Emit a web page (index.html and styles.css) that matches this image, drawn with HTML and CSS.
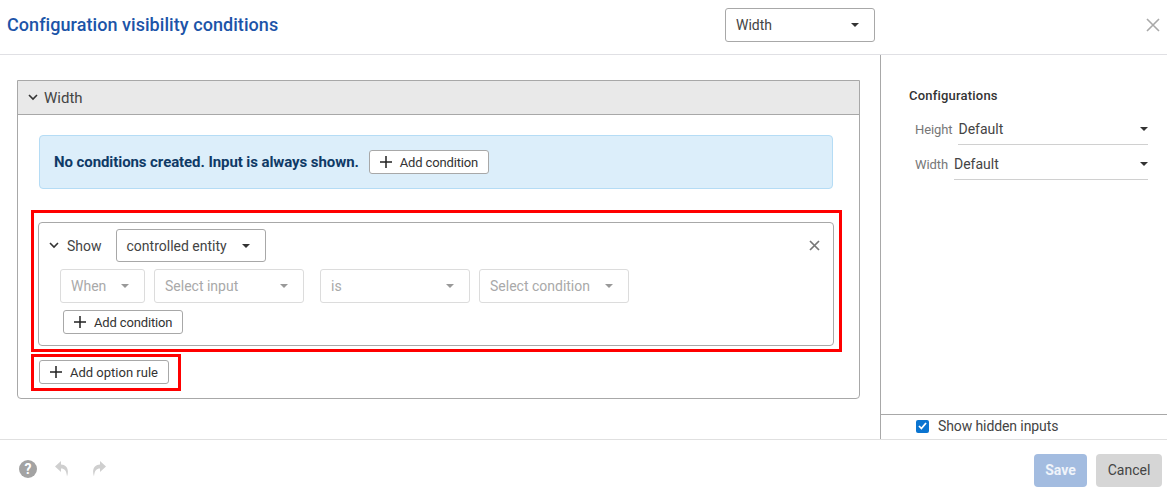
FILE: index.html
```html
<!DOCTYPE html>
<html lang="en">
<head>
<meta charset="utf-8">
<title>Configuration visibility conditions</title>
<link rel="stylesheet" href="styles.css">
</head>
<body>
<div class="dialog">
  <header class="head">
    <h1 class="title">Configuration visibility conditions</h1>
    <div class="select head-select"><span>Width</span><i class="caret"></i></div>
    <svg class="close" width="14" height="14" viewBox="0 0 14 14"><path d="M1 1l12 12M13 1L1 13" stroke="#a9a9a9" stroke-width="1.6" fill="none"/></svg>
  </header>
  <div class="body">
    <main class="main">
      <section class="panel">
        <div class="panel-head">
          <svg class="chev" width="10" height="7" viewBox="0 0 10 7"><path d="M1 1l4 4 4-4" stroke="#333" stroke-width="1.6" fill="none"/></svg>
          <span>Width</span>
        </div>
        <div class="panel-body">
          <div class="info">
            <strong>No conditions created. Input is always shown.</strong>
            <button class="btn"><svg class="plus" width="12" height="12" viewBox="0 0 12 12"><path d="M6 0v12M0 6h12" stroke="#222" stroke-width="1.5"/></svg>Add condition</button>
          </div>
          <div class="card">
            <div class="row-show">
              <svg class="chev" width="10" height="7" viewBox="0 0 10 7"><path d="M1 1l4 4 4-4" stroke="#333" stroke-width="1.6" fill="none"/></svg>
              <span class="show">Show</span>
              <div class="select entity"><span>controlled entity</span><i class="caret"></i></div>
              <svg class="card-x" width="11" height="11" viewBox="0 0 11 11"><path d="M1 1l9 9M10 1l-9 9" stroke="#777" stroke-width="1.7" fill="none"/></svg>
            </div>
            <div class="row-when">
              <div class="select off w-when"><span>When</span><i class="caret"></i></div>
              <div class="select off w-input"><span>Select input</span><i class="caret"></i></div>
              <div class="select off w-is"><span>is</span><i class="caret"></i></div>
              <div class="select off w-cond"><span>Select condition</span><i class="caret"></i></div>
            </div>
            <button class="btn card-btn"><svg class="plus" width="12" height="12" viewBox="0 0 12 12"><path d="M6 0v12M0 6h12" stroke="#222" stroke-width="1.5"/></svg>Add condition</button>
          </div>
          <button class="btn rule-btn"><svg class="plus" width="12" height="12" viewBox="0 0 12 12"><path d="M6 0v12M0 6h12" stroke="#222" stroke-width="1.5"/></svg>Add option rule</button>
        </div>
      </section>
      <div class="mark mark-card"></div>
      <div class="mark mark-rule"></div>
    </main>
    <aside class="side">
      <div class="side-top">
        <h2 class="side-title">Configurations</h2>
        <div class="cfg"><label>Height</label><div class="cfg-val"><span>Default</span><i class="caret dark"></i></div></div>
        <div class="cfg"><label>Width</label><div class="cfg-val"><span>Default</span><i class="caret dark"></i></div></div>
      </div>
      <div class="side-foot">
        <span class="check"><svg width="9" height="8" viewBox="0 0 9 8"><path d="M1 4l2.400 2.500L8 1" stroke="#fff" stroke-width="1.8" fill="none"/></svg></span>
        <span>Show hidden inputs</span>
      </div>
    </aside>
  </div>
  <footer class="foot">
    <div class="tools">
      <svg width="18" height="18" viewBox="0 0 18 18"><circle cx="9" cy="9" r="9" fill="#a3a3a3"/><text x="9" y="14" text-anchor="middle" class="q">?</text></svg>
      <svg class="undo" width="14" height="16" viewBox="0 0 14 16"><path d="M6 0L0 5.500 6 11V7.500c3.500 0 5.500 2 6 8 2.500-7-.5-12-6-12z" fill="#cfcfcf"/></svg>
      <svg class="redo" width="14" height="16" viewBox="0 0 14 16"><path d="M8 0l6 5.500L8 11V7.500c-3.500 0-5.500 2-6 8-2.500-7 .5-12 6-12z" fill="#cfcfcf"/></svg>
    </div>
    <div class="actions">
      <button class="act save">Save</button>
      <button class="act cancel">Cancel</button>
    </div>
  </footer>
</div>
</body>
</html>
```
FILE: styles.css
```css
* { box-sizing: border-box; }
html, body { margin: 0; height: 100%; }
body { background: #fff; font-family: Roboto, "Liberation Sans", sans-serif; font-size: 14px; color: #333; overflow: hidden; }
.dialog { width: 1167px; height: 494px; display: flex; flex-direction: column; }

.head { height: 55px; flex: none; display: flex; align-items: center; border-bottom: 1px solid #e0e0e4; padding: 0 7px 5px 7px; }
.title { margin: 0; font-size: 18px; font-weight: 500; letter-spacing: .06px; color: #1c54a8; width: 718px; }
.head-select { width: 150px; height: 34px; padding-top: 1px; }
.close { margin-left: auto; }

.select { display: flex; align-items: center; justify-content: space-between; border: 1px solid #a8a8a8; border-radius: 3px; padding-right: 15px; padding-left: 10px; background: #fff; color: #444; font-size: 14px; }
.caret { display: block; width: 0; height: 0; border-left: 4px solid transparent; border-right: 4px solid transparent; border-top: 4px solid #333; }
.off { border-color: #dcdcdc; color: #a9a9a9; height: 34px; }
.off .caret { border-top-color: #999; }

.body { flex: 1; display: flex; min-height: 0; }
.main { width: 881px; flex: none; padding: 25px 20px 0 17px; border-right: 1px solid #a8a8a8; position: relative; }
.panel { height: 319px; border: 1px solid #a8a8a8; border-radius: 0 0 4px 4px; }
.panel-head { height: 34px; background: #e9e9e9; border-bottom: 1px solid #a8a8a8; display: flex; align-items: center; gap: 6px; padding-left: 10px; font-size: 15px; color: #444; }
.panel-body { padding: 20px 26px 0 21px; }
.info { height: 54px; background: #dceefa; border: 1px solid #b5dcf5; border-radius: 4px; display: flex; align-items: center; gap: 10px; padding-left: 14px; color: #0f3a66; }
.info strong { font-weight: 700; font-size: 15px; letter-spacing: -.08px; }
.btn { display: inline-flex; align-items: center; height: 24px; background: #fff; border: 1px solid #a8a8a8; border-radius: 3px; padding: 0 10px; font: 400 13px Roboto, "Liberation Sans", sans-serif; letter-spacing: -.15px; color: #333; }
.plus { margin-right: 8px; }

.card { margin: 33px -1px 0 -1px; height: 124px; border: 1px solid #a8a8a8; border-radius: 4px; padding: 6px 0 0 10px; }
.row-show { display: flex; align-items: center; height: 33px; }
.show { margin-left: 8px; color: #444; }
.entity { width: 150px; height: 33px; margin-left: 14px; }
.card-x { margin-left: auto; margin-right: 13px; }
.row-when { display: flex; margin-top: 7px; padding-left: 11px; }
.w-when { width: 85px; margin-right: 9px; }
.w-input { width: 150px; margin-right: 16px; }
.w-is { width: 150px; margin-right: 9px; }
.w-cond { width: 150px; }
.card-btn { margin: 7px 0 0 14px; }
.rule-btn { margin-top: 14px; letter-spacing: 0; }

.mark { position: absolute; border: 3px solid #f00; pointer-events: none; }
.mark-card { left: 31px; top: 155px; width: 811px; height: 142px; }
.mark-rule { left: 31px; top: 299px; width: 150px; height: 37px; }

.side { flex: 1; display: flex; flex-direction: column; }
.side-top { flex: 1; padding: 33px 19px 0 28px; }
.side-title { margin: 0 0 12px; font-size: 13px; font-weight: 500; letter-spacing: .2px; color: #333; }
.cfg { display: flex; padding-left: 6px; gap: 6px; height: 35px; }
.cfg label { font-size: 13px; letter-spacing: -.1px; color: #777; padding-top: 7px; }
.cfg-val { flex: 1; height: 30px; display: flex; align-items: center; justify-content: space-between; border-bottom: 1px solid #d0d0d0; font-size: 14px; color: #444; padding-bottom: 2px; }
.caret.dark { border-top-color: #333; }
.side-foot { height: 25px; flex: none; border-top: 1px solid #a8a8a8; display: flex; align-items: center; gap: 9px; padding: 0 0 2px 35px; letter-spacing: -.1px; color: #444; }
.check { width: 13px; height: 13px; background: #0a74d0; border-radius: 2px; display: flex; align-items: center; justify-content: center; }

.foot { height: 55px; flex: none; border-top: 1px solid #e0e0e0; display: flex; align-items: center; justify-content: space-between; padding: 6px 5px 0 19px; }
.tools { display: flex; align-items: center; padding-bottom: 2px; }
.q { font: 700 14px Roboto, sans-serif; fill: #fff; }
.undo { margin-left: 18px; }
.redo { margin-left: 23px; }
.actions { display: flex; gap: 9px; }
.act { height: 33px; border: 0; border-radius: 4px; font: 700 14px Roboto, sans-serif; }
.save { width: 53px; background: #a3bce0; color: #f0f4fa; }
.cancel { width: 66px; background: #d6d6d6; color: #444; font-weight: 400; }
```
